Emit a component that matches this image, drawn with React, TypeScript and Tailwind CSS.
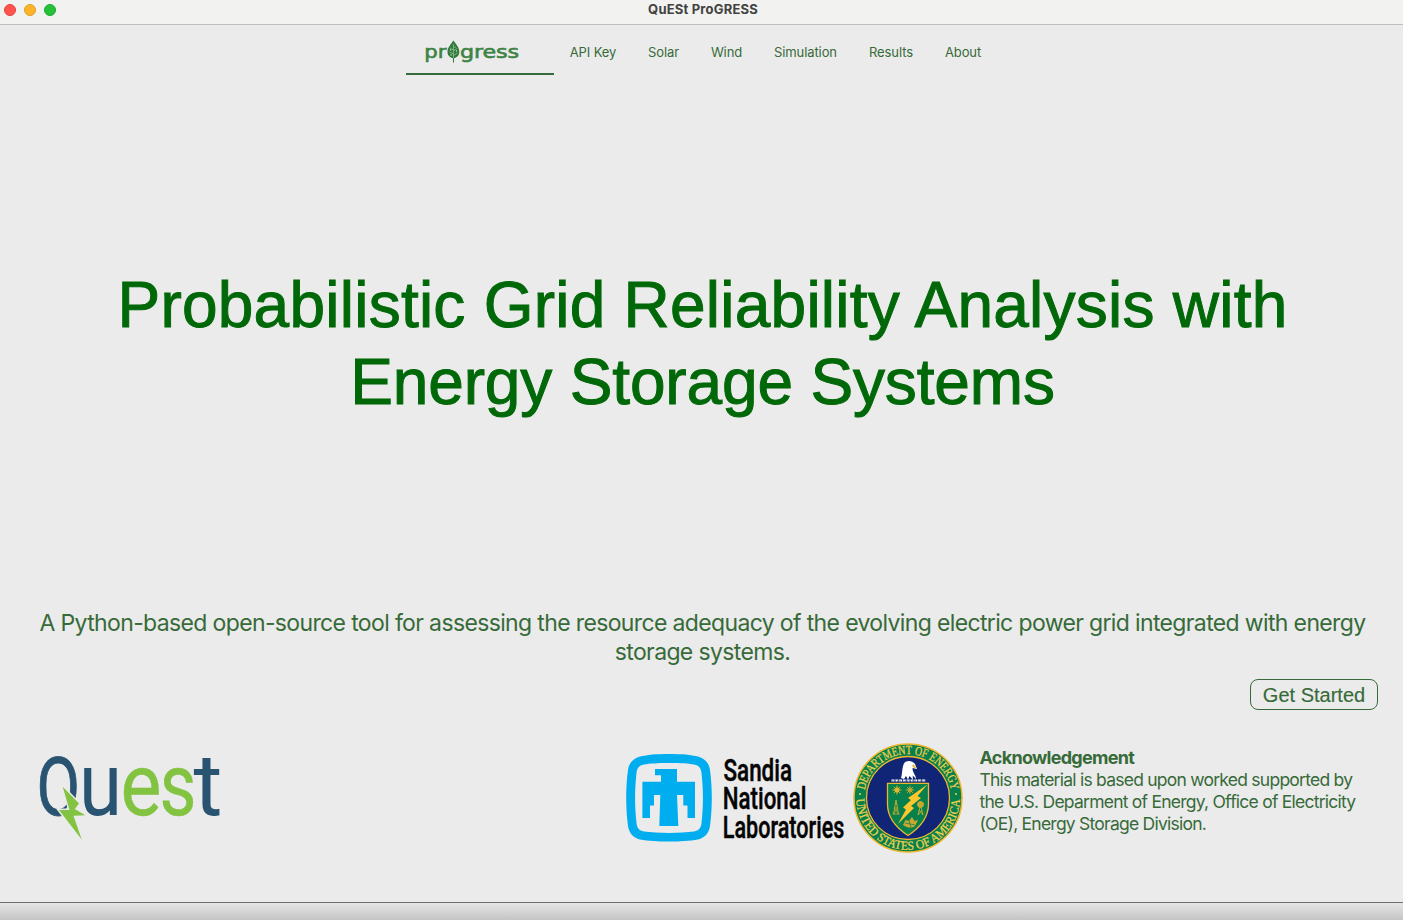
import React from "react";

const navItems = [
  { label: "API Key", width: "w-[78px]" },
  { label: "Solar", width: "w-[63px]" },
  { label: "Wind", width: "w-[63px]" },
  { label: "Simulation", width: "w-[95px]" },
  { label: "Results", width: "w-[76px]" },
  { label: "About", width: "w-[68px]" },
];

function ProgressLogo() {
  return (
    <svg width="96" height="26" viewBox="424 38 96 26" role="img" aria-label="progress">
      <g fill="#3d8344" stroke="#3d8344" strokeWidth=".6" fontFamily="'DejaVu Sans', sans-serif" fontSize="18.5">
        <text x="424.3" y="58" textLength="22" lengthAdjust="spacingAndGlyphs">pr</text>
        <text x="460" y="58" textLength="59" lengthAdjust="spacingAndGlyphs">gress</text>
      </g>
      <path d="M453.4 40.5C456 44 459.3 47.5 459.3 52C459.3 56 456.5 57.5 454 58.3V62.5H453V58.3C450.3 57.5 447.5 56 447.5 52C447.5 47.5 451 44 453.4 40.5Z" fill="#2e7a38" />
      <path d="M453.4 44V58M453.4 50L450 48M453.4 54L449.5 52M453.4 51L457 48.5M453.4 55.5L457.5 53" stroke="#a9c9aa" strokeWidth=".7" fill="none" />
      <g fill="#d4e2d3"><circle cx="450.5" cy="50" r=".7" /><circle cx="456.5" cy="51" r=".7" /><circle cx="451" cy="55" r=".7" /><circle cx="455" cy="47" r=".6" /></g>
    </svg>
  );
}

function QuestLogo() {
  return (
    <svg className="overflow-visible" width="184" height="88" viewBox="38 753 184 88" role="img" aria-label="Quest">
      <g fontFamily="Roboto, sans-serif">
        <g fill="#285371">
          <text x="36.8" y="815" fontSize="82" textLength="43.5" lengthAdjust="spacingAndGlyphs" stroke="#285371" strokeWidth=".8">Q</text>
          <text x="79" y="815" fontSize="89" textLength="43" lengthAdjust="spacingAndGlyphs">u</text>
          <text x="193.5" y="815" fontSize="87" textLength="29" lengthAdjust="spacingAndGlyphs">t</text>
        </g>
        <g fill="#82c341" stroke="#82c341" strokeWidth=".4">
          <text x="120.5" y="815" fontSize="88" textLength="41" lengthAdjust="spacingAndGlyphs">e</text>
          <text x="159.5" y="815" fontSize="88" textLength="37" lengthAdjust="spacingAndGlyphs">s</text>
        </g>
      </g>
      <path d="M66 809L72 798L82 818L76 826Z" fill="#ebebeb" />
      <path d="M62.7 786.7L79 803.5L74.7 809L85.3 815.3L73.5 815.8L81.7 839.5L59 810H69.5Z" fill="#82c341" stroke="#ebebeb" strokeWidth="3" paintOrder="stroke" />
    </svg>
  );
}

function SandiaLogo() {
  return (
    <svg className="overflow-visible" width="222" height="90" viewBox="624 753 222 90" role="img" aria-label="Sandia National Laboratories">
      <path fill="#00adef" fillRule="evenodd" d="M669 754C682 754 691 754.8 698 756.5C705 758.5 709 763 710 770C712.4 788 712.4 808 710 826C709 833 705 837.5 698 839.5C682 842.2 656 842.2 640 839.5C633 837.5 629 833 628 826C625.6 808 625.6 788 628 770C629 763 633 758.5 640 756.5C647 754.8 656 754 669 754ZM669 763C657 763 650 763.5 644 764.5C639 765.5 637 768 636.5 773C634.6 790 634.6 806 636.5 823C637 828 639 830.5 644 831.5C657 833.4 681 833.4 694 831.5C699 830.5 701 828 701.5 823C703.4 806 703.4 790 701.5 773C701 768 699 765.5 694 764.5C688 763.5 681 763 669 763Z" />
      <path fill="#00adef" d="M655 769H677V781.7H695V818H687.5V805.5H683.3V795H677L678.3 826H659.3L660.3 795H654V805.5H650V818H642.4V781.7H661V775.3H655Z" />
      <g fontFamily="Roboto, sans-serif" fontWeight="500" fontSize="32" fill="#050505" stroke="#050505" strokeWidth=".5">
        <text x="723.5" y="781" textLength="68.5" lengthAdjust="spacingAndGlyphs">Sandia</text>
        <text x="722.8" y="809.3" textLength="83.5" lengthAdjust="spacingAndGlyphs">National</text>
        <text x="722.8" y="837.8" textLength="121.5" lengthAdjust="spacingAndGlyphs">Laboratories</text>
      </g>
    </svg>
  );
}

function EnergySeal() {
  return (
    <svg width="110" height="112" viewBox="853 742 110 112" role="img" aria-label="Department of Energy, United States of America">
      <defs>
        <path id="seal-top" d="M864.1 798A43.9 43.9 0 0 1 951.9 798" />
        <path id="seal-bottom" d="M856.2 798A51.8 51.8 0 0 0 959.8 798" />
      </defs>
      <circle cx="908" cy="798" r="54" fill="#08804b" stroke="#efb72f" strokeWidth="1.5" />
      <circle cx="908" cy="798" r="41.5" fill="#102576" stroke="#efb72f" strokeWidth="1.3" />
      <g fill="#f2d04d" stroke="#f2d04d" strokeWidth=".25" fontFamily="'Liberation Serif', serif" fontSize="12.5">
        <text><textPath href="#seal-top" startOffset="8" textLength="122" lengthAdjust="spacingAndGlyphs">DEPARTMENT OF ENERGY</textPath></text>
        <text><textPath href="#seal-bottom" startOffset="1" textLength="160" lengthAdjust="spacingAndGlyphs">UNITED STATES OF AMERICA</textPath></text>
      </g>
      <circle cx="860" cy="794" r="1" fill="#f2d04d" /><circle cx="956" cy="794" r="1" fill="#f2d04d" />
      <path d="M901 778C902.5 774 902 767 904 763.5C906.5 760 912 760.5 915 764L917 769L912.5 768C912.5 773 916 775 916 779L912.8 775.5V779.5L909.5 776L908 779.5L906 776L904 779Z" fill="#fff" />
      <path d="M912 765L914 764.5L917 769L913 767.3Z" fill="#e9b93d" />
      <path d="M891.5 780.5H926" stroke="#fff" strokeWidth="2.2" strokeDasharray="3 .8" /><path d="M892 781H926" stroke="#26366f" strokeWidth=".7" strokeDasharray="1.5 1" />
      <path d="M887.5 783.3H928.5V804C928.5 819 918 829 908 835.5C898 829 887.5 819 887.5 804Z" fill="#08804b" stroke="#efb72f" strokeWidth="1.3" />
      <path d="M927.5 784.5L908 798L911 800L903 807.5L906 809.5L898 824L914 808L911 806L921 798L917.5 796Z" fill="#fcc72e" />
      <g stroke="#c7a92f" fill="none" strokeWidth=".9">
        <g stroke="#e7b82e"><circle cx="897" cy="790" r="2.2" fill="#e7b82e" /><path d="M897 785.5V794.5M892.5 790H901.5M893.8 786.8L900.2 793.2M900.2 786.8L893.8 793.2" /></g>
        <circle cx="910" cy="790" r="2" /><path d="M910 785.8V794.2M905.8 790H914.2M907 787L913 793M913 787L907 793" />
        <path d="M896 800L893.5 814M896 800L898.5 814M894 808H898M895 804H897M893 814L898 808M899 814L894 808M892.5 814H899.5" />
        <circle cx="920.5" cy="804.5" r="3" fill="#c7a92f" /><path d="M920.5 805L918 815M920.5 805L923 815M917 804.5H924M920.5 801V808M918 815L922 810M923 815L919 810" />
      </g>
      <path d="M903 825L905.5 820L909 821L912 817L914.5 821L918 820L915 826C912 828.5 907 828 903 825Z" fill="#c7a92f" />
      <path d="M905 823L915 825M909 821L911 827" stroke="#08804b" strokeWidth=".7" />
    </svg>
  );
}

export default function App() {
  return (
    <div className="flex h-[920px] w-[1403px] flex-col overflow-hidden bg-[#ebebeb] font-['Inter',sans-serif] text-[#376a39]">
      <header className="grid h-[25px] shrink-0 grid-cols-3 items-center border-b border-[#bebebe] bg-[#f2f2f0] px-[4px] pb-[5px]">
        <div className="flex gap-2">
          <span className="size-3 rounded-full border border-[#e0443e] bg-[#ff534d]" />
          <span className="size-3 rounded-full border border-[#dea123] bg-[#ffb32b]" />
          <span className="size-3 rounded-full border border-[#1aab29] bg-[#25c138]" />
        </div>
        <h1 className="pb-px pl-[3px] text-center text-[13px] leading-[19px] font-bold tracking-[0.2px] text-[#424242]">QuESt ProGRESS</h1>
      </header>
      <nav className="flex h-[50px] shrink-0 pl-[406px] text-[13px] tracking-[-0.1px]">
        <a className="flex w-[148px] items-start border-b-2 border-[#376a39] pt-[13px] pl-[18px]"><ProgressLogo /></a>
        {navItems.map((item) => (
          <a key={item.label} className={`${item.width} flex items-center justify-center pt-[5px] whitespace-nowrap`}><span>{item.label}</span></a>
        ))}
      </nav>
      <main className="flex grow flex-col">
        <h2 className="flex flex-col items-center pt-[192px] font-['Liberation_Sans',sans-serif] text-[64px] leading-[77px] whitespace-nowrap text-[#006808] [-webkit-text-stroke:1px_#006808]">
          <span className="pl-0.5 tracking-[0.24px]">Probabilistic Grid Reliability Analysis with</span>
          <span className="pl-0.5 tracking-[-0.15px]">Energy Storage Systems</span>
        </h2>
        <p className="mt-[188px] pl-0.5 text-center text-[23px] leading-[29px] tracking-[-0.64px] whitespace-nowrap">
          A Python-based open-source tool for assessing the resource adequacy of the evolving electric power grid integrated with energy<br />storage systems.
        </p>
        <div className="mt-3 flex justify-end pr-[25px]">
          <button className="h-[31px] w-[128px] rounded-lg border border-[#376a39] pt-px font-['Liberation_Sans',sans-serif] text-[20px] leading-[28px] whitespace-nowrap [-webkit-text-stroke:0.15px_#376a39]">Get Started</button>
        </div>
        <section className="flex items-start pt-8 pl-[38px]">
          <div className="mt-[11px] w-[586px]"><QuestLogo /></div>
          <div className="mt-[11px]"><SandiaLogo /></div>
          <div className="ml-[7px]"><EnergySeal /></div>
          <div className="mt-[5px] ml-[16.5px] text-[17.5px] leading-[22px] tracking-[-0.76px] whitespace-nowrap">
            <h3 className="text-[18px] font-bold tracking-[-0.72px]">Acknowledgement</h3>
            <p>This material is based upon worked supported by<br />the U.S. Deparment of Energy, Office of Electricity<br />(OE), Energy Storage Division.</p>
          </div>
        </section>
      </main>
      <footer className="h-[18px] shrink-0 border-t border-[#707070] bg-linear-to-b from-[#e6e6e6] to-[#c4c4c4]" />
    </div>
  );
}
